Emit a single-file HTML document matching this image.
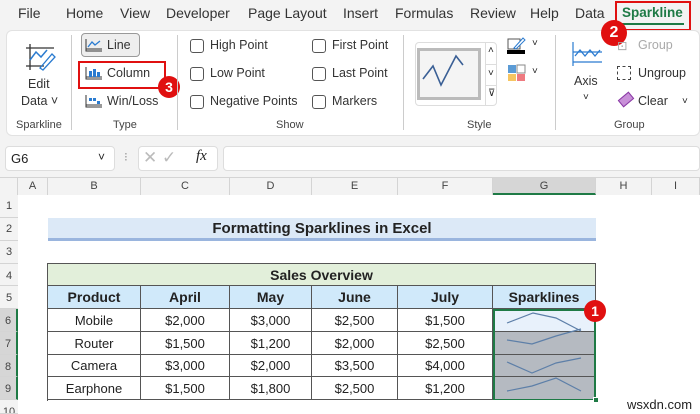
<!DOCTYPE html>
<html><head><meta charset="utf-8"><style>
*{margin:0;padding:0;box-sizing:border-box}
body{width:700px;height:414px;overflow:hidden;background:#f3f3f3;font-family:"Liberation Sans","DejaVu Sans",sans-serif;position:relative;color:#222}
.a{position:absolute}
.menu{font-size:14px;top:5px;color:#333;white-space:nowrap}
.rb{font-size:12.5px;color:#333;white-space:nowrap}
.cb{width:14px;height:14px;border:1px solid #555;border-radius:3px;background:#fff}
.grp{font-size:11px;color:#444;top:119px}
.sep{width:1px;background:#ccc;top:35px;height:95px}
.badge{width:22px;height:22px;border-radius:50%;background:#e01010;color:#fff;font-size:14px;font-weight:bold;text-align:center;line-height:22px}
.ch{top:178px;height:17px;font-size:11px;color:#444;text-align:center;line-height:17px;border-right:1px solid #d4d4d4;background:#f3f3f3}
.rh{left:0;width:18px;font-size:11px;color:#444;text-align:center;border-bottom:1px solid #d4d4d4;background:#f3f3f3}
.c{font-size:13px;text-align:center;border-right:1px solid #555;border-bottom:1px solid #555;display:flex;align-items:center;justify-content:center}
.b{font-weight:bold;font-size:14px}
</style></head><body>
<!-- menu -->
<div class="a menu" style="left:18px">File</div>
<div class="a menu" style="left:66px">Home</div>
<div class="a menu" style="left:120px">View</div>
<div class="a menu" style="left:166px">Developer</div>
<div class="a menu" style="left:248px">Page Layout</div>
<div class="a menu" style="left:343px">Insert</div>
<div class="a menu" style="left:395px">Formulas</div>
<div class="a menu" style="left:470px">Review</div>
<div class="a menu" style="left:530px">Help</div>
<div class="a menu" style="left:575px">Data</div>
<div class="a menu" style="left:622px;color:#1e7a45;font-weight:bold;font-size:13.5px">Sparkline</div>
<div class="a" style="left:622px;top:23px;width:62px;height:2px;background:#1e7a45"></div>
<div class="a" style="left:615px;top:1px;width:76px;height:30px;border:2px solid #e01010"></div>
<!-- ribbon -->
<div class="a" style="left:6px;top:30px;width:694px;height:106px;background:#fff;border-radius:6px;border:1px solid #e2e2e2"></div>
<div class="a badge" style="left:601px;top:20px;width:26px;height:26px;line-height:26px;font-size:16px">2</div>
<svg class="a" style="left:24px;top:42px" width="34" height="30"><path d="M2 6H30M6 2V28M2 24H20" stroke="#333" stroke-width="1.3" fill="none"/><path d="M6 18L12 10L17 15L23 8" stroke="#2a7bd0" stroke-width="1.5" fill="none"/><path d="M16 26L28 12L31 15L19 28Z" stroke="#2a7bd0" stroke-width="1.3" fill="none"/></svg>
<div class="a rb" style="left:28px;top:77px">Edit</div>
<div class="a rb" style="left:21px;top:94px">Data ˅</div>
<div class="a grp" style="left:16px">Sparkline</div>
<div class="a sep" style="left:71px"></div>
<div class="a" style="left:81px;top:33px;width:59px;height:24px;border:1px solid #999;border-radius:4px;background:#eee"></div>
<svg class="a" style="left:85px;top:38px" width="18" height="14"><path d="M1 1V13H17M1 11H17" stroke="#333" fill="none"/><path d="M3 9L7 4L10 7L15 3" stroke="#2a7bd0" stroke-width="1.3" fill="none"/></svg>
<div class="a rb" style="left:107px;top:38px">Line</div>
<svg class="a" style="left:85px;top:66px" width="18" height="14"><path d="M1 1V13H17M1 11H17" stroke="#333" fill="none"/><rect x="4" y="5" width="3" height="6" fill="#2a7bd0"/><rect x="8" y="3" width="3" height="8" fill="#2a7bd0"/><rect x="12" y="6" width="3" height="5" fill="#2a7bd0"/></svg>
<div class="a rb" style="left:107px;top:66px">Column</div>
<div class="a" style="left:78px;top:61px;width:88px;height:28px;border:2px solid #e01010"></div>
<div class="a badge" style="left:158px;top:76px">3</div>
<svg class="a" style="left:85px;top:94px" width="18" height="14"><path d="M1 1V13H17M1 11H17" stroke="#333" fill="none"/><rect x="4" y="4" width="3" height="3" fill="#2a7bd0"/><rect x="8" y="4" width="3" height="3" fill="#2a7bd0"/><rect x="12" y="7" width="3" height="3" fill="#2a7bd0"/></svg>
<div class="a rb" style="left:107px;top:94px">Win/Loss</div>
<div class="a grp" style="left:113px">Type</div>
<div class="a sep" style="left:177px"></div>
<div class="a cb" style="left:190px;top:39px"></div><div class="a rb" style="left:210px;top:38px">High Point</div>
<div class="a cb" style="left:190px;top:67px"></div><div class="a rb" style="left:210px;top:66px">Low Point</div>
<div class="a cb" style="left:190px;top:95px"></div><div class="a rb" style="left:210px;top:94px">Negative Points</div>
<div class="a cb" style="left:312px;top:39px"></div><div class="a rb" style="left:332px;top:38px">First Point</div>
<div class="a cb" style="left:312px;top:67px"></div><div class="a rb" style="left:332px;top:66px">Last Point</div>
<div class="a cb" style="left:312px;top:95px"></div><div class="a rb" style="left:332px;top:94px">Markers</div>
<div class="a grp" style="left:276px">Show</div>
<div class="a sep" style="left:403px"></div>
<div class="a" style="left:415px;top:42px;width:82px;height:64px;border:1px solid #ddd;border-radius:4px"></div>
<div class="a" style="left:417px;top:48px;width:64px;height:52px;border:3px solid #bbb;background:#f4f4f4"></div>
<svg class="a" style="left:420px;top:51px" width="58" height="46"><path d="M3 28L13 15L21 34L36 5L43 14" stroke="#3a5f95" stroke-width="1.6" fill="none"/></svg>
<div class="a" style="left:485px;top:42px;width:1px;height:64px;background:#ddd"></div>
<div class="a" style="left:486px;top:64px;width:11px;height:1px;background:#ddd"></div>
<div class="a" style="left:486px;top:85px;width:11px;height:1px;background:#ddd"></div>
<div class="a" style="left:488px;top:45px;font-size:10px">˄</div>
<div class="a" style="left:488px;top:68px;font-size:10px">˅</div>
<div class="a" style="left:488px;top:88px;font-size:10px">⊽</div>
<div class="a grp" style="left:467px">Style</div>
<svg class="a" style="left:507px;top:36px" width="20" height="18"><rect x="1" y="3" width="12" height="10" fill="none" stroke="#555"/><path d="M7 12L16 2L18 4L9 13Z" fill="#fff" stroke="#2a7bd0"/><rect x="0" y="14" width="18" height="4" fill="#000"/></svg>
<div class="a" style="left:532px;top:38px;font-size:10px">˅</div>
<svg class="a" style="left:507px;top:64px" width="20" height="18"><rect x="1" y="1" width="8" height="8" fill="#5b9bd5"/><rect x="10" y="1" width="8" height="8" fill="#fff" stroke="#888"/><rect x="1" y="10" width="8" height="7" fill="#f6c561"/><rect x="10" y="10" width="8" height="7" fill="#ee7a80"/></svg>
<div class="a" style="left:532px;top:66px;font-size:10px">˅</div>
<div class="a sep" style="left:555px"></div>
<svg class="a" style="left:570px;top:40px" width="34" height="28"><path d="M3 2V26M3 12H32M3 22H32" stroke="#2a7bd0" stroke-width="1.2" fill="none"/><path d="M5 16L10 10L15 16L20 10L25 16L30 10" stroke="#2a7bd0" stroke-width="1.3" fill="none"/></svg>
<div class="a rb" style="left:574px;top:74px">Axis</div>
<div class="a" style="left:583px;top:92px;font-size:10px">˅</div>
<div class="a rb" style="left:617px;top:38px;color:#aaa">⊡</div>
<div class="a rb" style="left:638px;top:38px;color:#aaa">Group</div>
<div class="a" style="left:617px;top:66px;width:14px;height:14px;border:1px dashed #444"></div>
<div class="a rb" style="left:638px;top:66px">Ungroup</div>
<div class="a" style="left:619px;top:95px;width:14px;height:9px;background:#c890d8;border:1px solid #8a3aa5;transform:rotate(-40deg)"></div>
<div class="a rb" style="left:638px;top:94px">Clear</div>
<div class="a" style="left:682px;top:96px;font-size:10px">˅</div>
<div class="a grp" style="left:614px">Group</div>
<!-- formula bar -->
<div class="a" style="left:5px;top:146px;width:110px;height:25px;background:#fff;border:1px solid #ddd;border-radius:4px"></div>
<div class="a" style="left:11px;top:151px;font-size:13px">G6</div>
<div class="a" style="left:98px;top:150px;font-size:12px">˅</div>
<div class="a" style="left:124px;top:150px;font-size:12px;color:#999">⁝</div>
<div class="a" style="left:138px;top:146px;width:80px;height:25px;background:#fff;border:1px solid #ddd;border-radius:4px"></div>
<div class="a" style="left:143px;top:148px;font-size:17px;color:#bbb">✕ ✓</div>
<div class="a" style="left:196px;top:148px;font-size:15px;font-style:italic;font-family:'Liberation Serif',serif">fx</div>
<div class="a" style="left:223px;top:146px;width:477px;height:25px;background:#fff;border:1px solid #ddd;border-radius:4px"></div>
<!-- grid -->
<div class="a" style="left:18px;top:195px;width:682px;height:219px;background:#fff"></div>
<div class="a" style="left:0;top:177px;width:700px;height:1px;background:#d4d4d4"></div>
<div class="a ch" style="left:0;width:18px"></div>
<div class="a ch" style="left:18px;width:30px">A</div>
<div class="a ch" style="left:48px;width:93px">B</div>
<div class="a ch" style="left:141px;width:89px">C</div>
<div class="a ch" style="left:230px;width:82px">D</div>
<div class="a ch" style="left:312px;width:86px">E</div>
<div class="a ch" style="left:398px;width:95px">F</div>
<div class="a ch" style="left:493px;width:103px;background:#d6d6d6;border-bottom:2px solid #1e7a45">G</div>
<div class="a ch" style="left:596px;width:56px">H</div>
<div class="a ch" style="left:652px;width:48px">I</div>
<div class="a rh" style="top:195px;height:23px;line-height:23px">1</div>
<div class="a rh" style="top:218px;height:23px;line-height:23px">2</div>
<div class="a rh" style="top:241px;height:23px;line-height:23px">3</div>
<div class="a rh" style="top:264px;height:22px;line-height:24px">4</div>
<div class="a rh" style="top:286px;height:23px;line-height:24px">5</div>
<div class="a rh" style="top:309px;height:23px;line-height:24px;background:#d6d6d6;border-right:2px solid #1e7a45">6</div>
<div class="a rh" style="top:332px;height:23px;line-height:24px;background:#d6d6d6;border-right:2px solid #1e7a45">7</div>
<div class="a rh" style="top:355px;height:22px;line-height:24px;background:#d6d6d6;border-right:2px solid #1e7a45">8</div>
<div class="a rh" style="top:377px;height:23px;line-height:24px;background:#d6d6d6;border-right:2px solid #1e7a45">9</div>
<div class="a rh" style="top:400px;height:14px;line-height:24px;overflow:hidden">10</div>
<!-- title -->
<div class="a b" style="left:48px;top:218px;width:548px;height:23px;background:#dce9f7;border-bottom:3px solid #9ab5de;text-align:center;line-height:21px;font-size:15px">Formatting Sparklines in Excel</div>
<!-- table -->
<div class="a" style="left:47px;top:263px;width:549px;height:138px;border:1px solid #555;border-right:none;border-bottom:none"></div>
<div class="a c b" style="left:48px;top:264px;width:548px;height:22px;background:#e2efda">Sales Overview</div>
<div class="a c b" style="left:48px;top:286px;width:93px;height:23px;background:#d0e9fa">Product</div>
<div class="a c b" style="left:141px;top:286px;width:89px;height:23px;background:#d0e9fa">April</div>
<div class="a c b" style="left:230px;top:286px;width:82px;height:23px;background:#d0e9fa">May</div>
<div class="a c b" style="left:312px;top:286px;width:86px;height:23px;background:#d0e9fa">June</div>
<div class="a c b" style="left:398px;top:286px;width:95px;height:23px;background:#d0e9fa">July</div>
<div class="a c b" style="left:493px;top:286px;width:103px;height:23px;background:#d0e9fa">Sparklines</div>

<div class="a c" style="left:48px;top:309px;width:93px;height:23px">Mobile</div>
<div class="a c" style="left:141px;top:309px;width:89px;height:23px">$2,000</div>
<div class="a c" style="left:230px;top:309px;width:82px;height:23px">$3,000</div>
<div class="a c" style="left:312px;top:309px;width:86px;height:23px">$2,500</div>
<div class="a c" style="left:398px;top:309px;width:95px;height:23px">$1,500</div>
<div class="a c" style="left:48px;top:332px;width:93px;height:23px">Router</div>
<div class="a c" style="left:141px;top:332px;width:89px;height:23px">$1,500</div>
<div class="a c" style="left:230px;top:332px;width:82px;height:23px">$1,200</div>
<div class="a c" style="left:312px;top:332px;width:86px;height:23px">$2,000</div>
<div class="a c" style="left:398px;top:332px;width:95px;height:23px">$2,500</div>
<div class="a c" style="left:48px;top:355px;width:93px;height:22px">Camera</div>
<div class="a c" style="left:141px;top:355px;width:89px;height:22px">$3,000</div>
<div class="a c" style="left:230px;top:355px;width:82px;height:22px">$2,000</div>
<div class="a c" style="left:312px;top:355px;width:86px;height:22px">$3,500</div>
<div class="a c" style="left:398px;top:355px;width:95px;height:22px">$4,000</div>
<div class="a c" style="left:48px;top:377px;width:93px;height:23px">Earphone</div>
<div class="a c" style="left:141px;top:377px;width:89px;height:23px">$1,500</div>
<div class="a c" style="left:230px;top:377px;width:82px;height:23px">$1,800</div>
<div class="a c" style="left:312px;top:377px;width:86px;height:23px">$2,500</div>
<div class="a c" style="left:398px;top:377px;width:95px;height:23px">$1,200</div>

<div class="a c" style="left:493px;top:309px;width:103px;height:23px;background:#e8f1fb"></div>
<div class="a c" style="left:493px;top:332px;width:103px;height:23px;background:#b5bac1"></div>
<div class="a c" style="left:493px;top:355px;width:103px;height:22px;background:#b5bac1"></div>
<div class="a c" style="left:493px;top:377px;width:103px;height:23px;background:#b5bac1"></div>
<svg class="a" style="left:493px;top:309px" width="103" height="91"><g stroke="#5d7fa8" stroke-width="1.2" fill="none">
<path d="M14 14L40 4L63 9L88 22"/>
<path d="M14 31L39 35L63 27L88 20"/>
<path d="M14 53L39 64L63 54L88 49"/>
<path d="M14 82L39 77L63 69L88 82"/></g>
<rect x="1" y="1" width="101" height="90" fill="none" stroke="#1e7a45" stroke-width="2"/></svg>
<div class="a" style="left:593px;top:397px;width:6px;height:6px;background:#1e7a45;border:1px solid #fff"></div>
<div class="a badge" style="left:584px;top:300px">1</div>
<div class="a" style="left:627px;top:397px;font-size:13px;color:#222">wsxdn.com</div>
</body></html>
